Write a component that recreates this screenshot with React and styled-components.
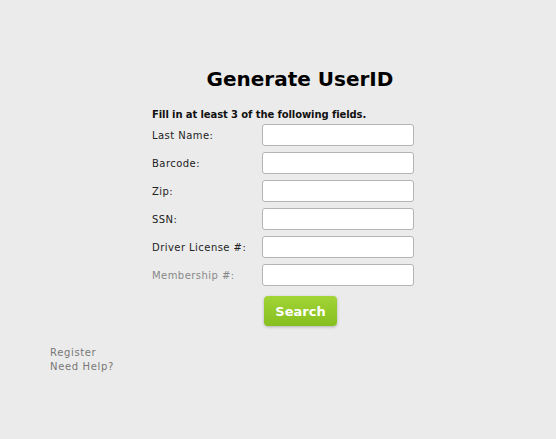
import React from 'react';
import styled, { createGlobalStyle } from 'styled-components';

const GlobalStyle = createGlobalStyle`
  html, body {
    margin: 0;
    background: #ebebeb;
    font-family: "DejaVu Sans", Verdana, sans-serif;
  }
`;

const fields = [
  { label: 'Last Name:' },
  { label: 'Barcode:' },
  { label: 'Zip:' },
  { label: 'SSN:' },
  { label: 'Driver License #:' },
  { label: 'Membership #:', muted: true },
];

const App = () => (
  <>
    <GlobalStyle />
    <Page>
      <Form>
        <Title>Generate UserID</Title>
        <Hint>Fill in at least 3 of the following fields.</Hint>
        <Fields>
          {fields.map((f) => (
            <Row key={f.label}>
              <Label $muted={f.muted}>{f.label}</Label>
              <Input type="text" />
            </Row>
          ))}
        </Fields>
        <SearchButton>Search</SearchButton>
      </Form>
      <Links>
        <LinkText>Register</LinkText>
        <LinkText>Need Help?</LinkText>
      </Links>
    </Page>
  </>
);

const Page = styled.div`
  width: 556px;
  height: 439px;
  padding-top: 65px;
  box-sizing: border-box;
`;

const Form = styled.div`
  margin-left: 152px;
  width: 296px;
`;

const Title = styled.h1`
  margin: 0;
  text-align: center;
  font-size: 20px;
  line-height: 28px;
  font-weight: bold;
  color: #000;
`;

const Hint = styled.div`
  margin-top: 15px;
  font-size: 10px;
  font-weight: bold;
  color: #111;
  line-height: 14px;
  letter-spacing: -0.1px;
`;

const Fields = styled.div`
  display: flex;
  flex-direction: column;
  gap: 6px;
  margin-top: 2px;
`;

const Row = styled.div`
  display: grid;
  grid-template-columns: 110px 152px;
  align-items: center;
`;

const Label = styled.label`
  font-size: 10px;
  letter-spacing: 0.45px;
  color: ${(p) => (p.$muted ? '#888' : '#222')};
`;

const Input = styled.input`
  box-sizing: border-box;
  width: 152px;
  height: 22px;
  background: #fff;
  border: 1px solid #b4b4b4;
  border-radius: 3px;
  outline: none;
`;

const SearchButton = styled.button`
  display: block;
  margin: 10px 0 0 112px;
  width: 73px;
  height: 30px;
  border: none;
  border-radius: 4px;
  background: linear-gradient(#a2d436, #86bf1f);
  box-shadow: 0 1px 3px rgba(0, 0, 0, 0.25);
  color: #fff;
  font-family: "DejaVu Sans", Verdana, sans-serif;
  font-size: 13px;
  font-weight: bold;
  cursor: pointer;
`;

const Links = styled.div`
  margin: 20px 0 0 50px;
  display: flex;
  flex-direction: column;
`;

const LinkText = styled.span`
  font-size: 10px;
  line-height: 14px;
  color: #777;
  letter-spacing: 0.65px;
`;

export default App;
